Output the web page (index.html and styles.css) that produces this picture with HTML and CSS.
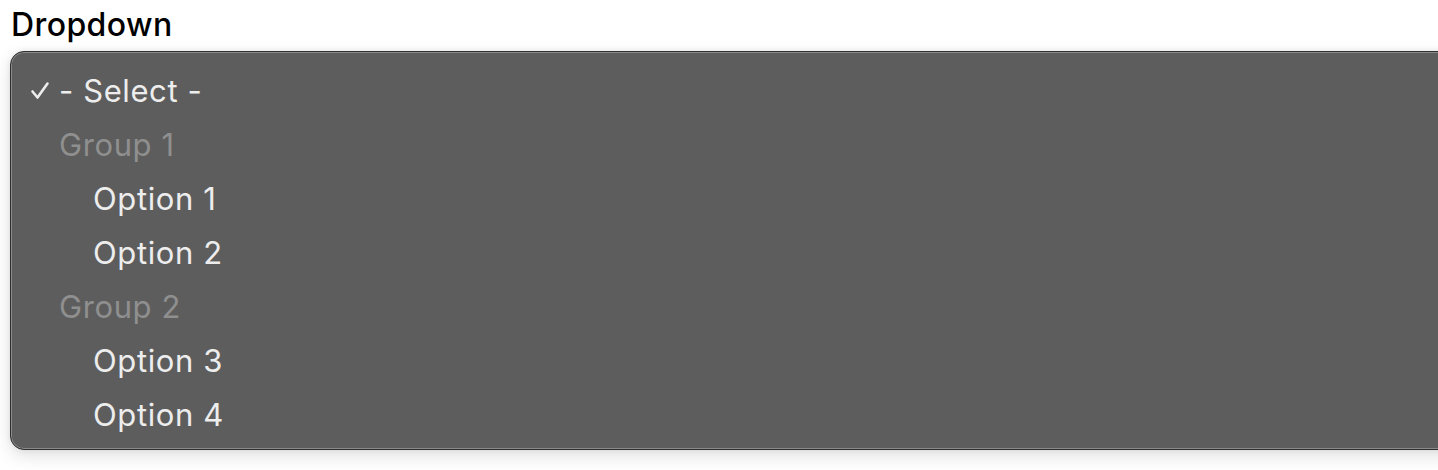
FILE: index.html
```html
<!DOCTYPE html>
<html>
<head>
<meta charset="utf-8">
<link rel="stylesheet" href="styles.css">
</head>
<body>
<div class="page">
  <div class="label">Dropdown</div>
  <div class="menu">
    <div class="item selected"><svg class="check" width="20" height="20" viewBox="0 0 20 20"><path d="M2.5 10.5 L7.5 16.5 L17.5 2.5" fill="none" stroke="#ededed" stroke-width="2.6" stroke-linecap="round" stroke-linejoin="round"/></svg>- Select -</div>
    <div class="item group">Group 1</div>
    <div class="item option">Option 1</div>
    <div class="item option">Option 2</div>
    <div class="item group">Group 2</div>
    <div class="item option">Option 3</div>
    <div class="item option">Option 4</div>
  </div>
</div>
</body>
</html>
```
FILE: styles.css
```css
html, body {
  margin: 0;
  padding: 0;
  background: #ffffff;
  overflow: hidden;
}
.page {
  width: 1438px;
  height: 470px;
  font-family: Inter, "Noto Sans", sans-serif;
  padding: 0 0 0 10px;
  box-sizing: border-box;
}
.label {
  font-size: 32px;
  font-weight: 500;
  line-height: 32px;
  color: #000;
  padding: 9px 0 0 1px;
  height: 42px;
  box-sizing: border-box;
  letter-spacing: 0.4px;
}
.menu {
  margin-top: 9px;
  width: 1460px;
  height: 399px;
  box-sizing: border-box;
  background: #5d5d5d;
  border: 1px solid #2e2e2e;
  border-radius: 14px;
  box-shadow: inset 0 0 0 1px #8a8a8a, 0 6px 18px rgba(0,0,0,0.12), 0 0 6px rgba(0,0,0,0.08);
  padding-top: 11px;
}
.item {
  height: 54px;
  display: flex;
  align-items: center;
  font-size: 31px;
  letter-spacing: 0.6px;
  color: #ededed;
}
.selected {
  padding-left: 48px;
  position: relative;
}
.check {
  position: absolute;
  left: 19px;
  top: 18px;
}
.group {
  padding-left: 48px;
  color: #8f8f8f;
}
.option {
  padding-left: 82px;
}
```
